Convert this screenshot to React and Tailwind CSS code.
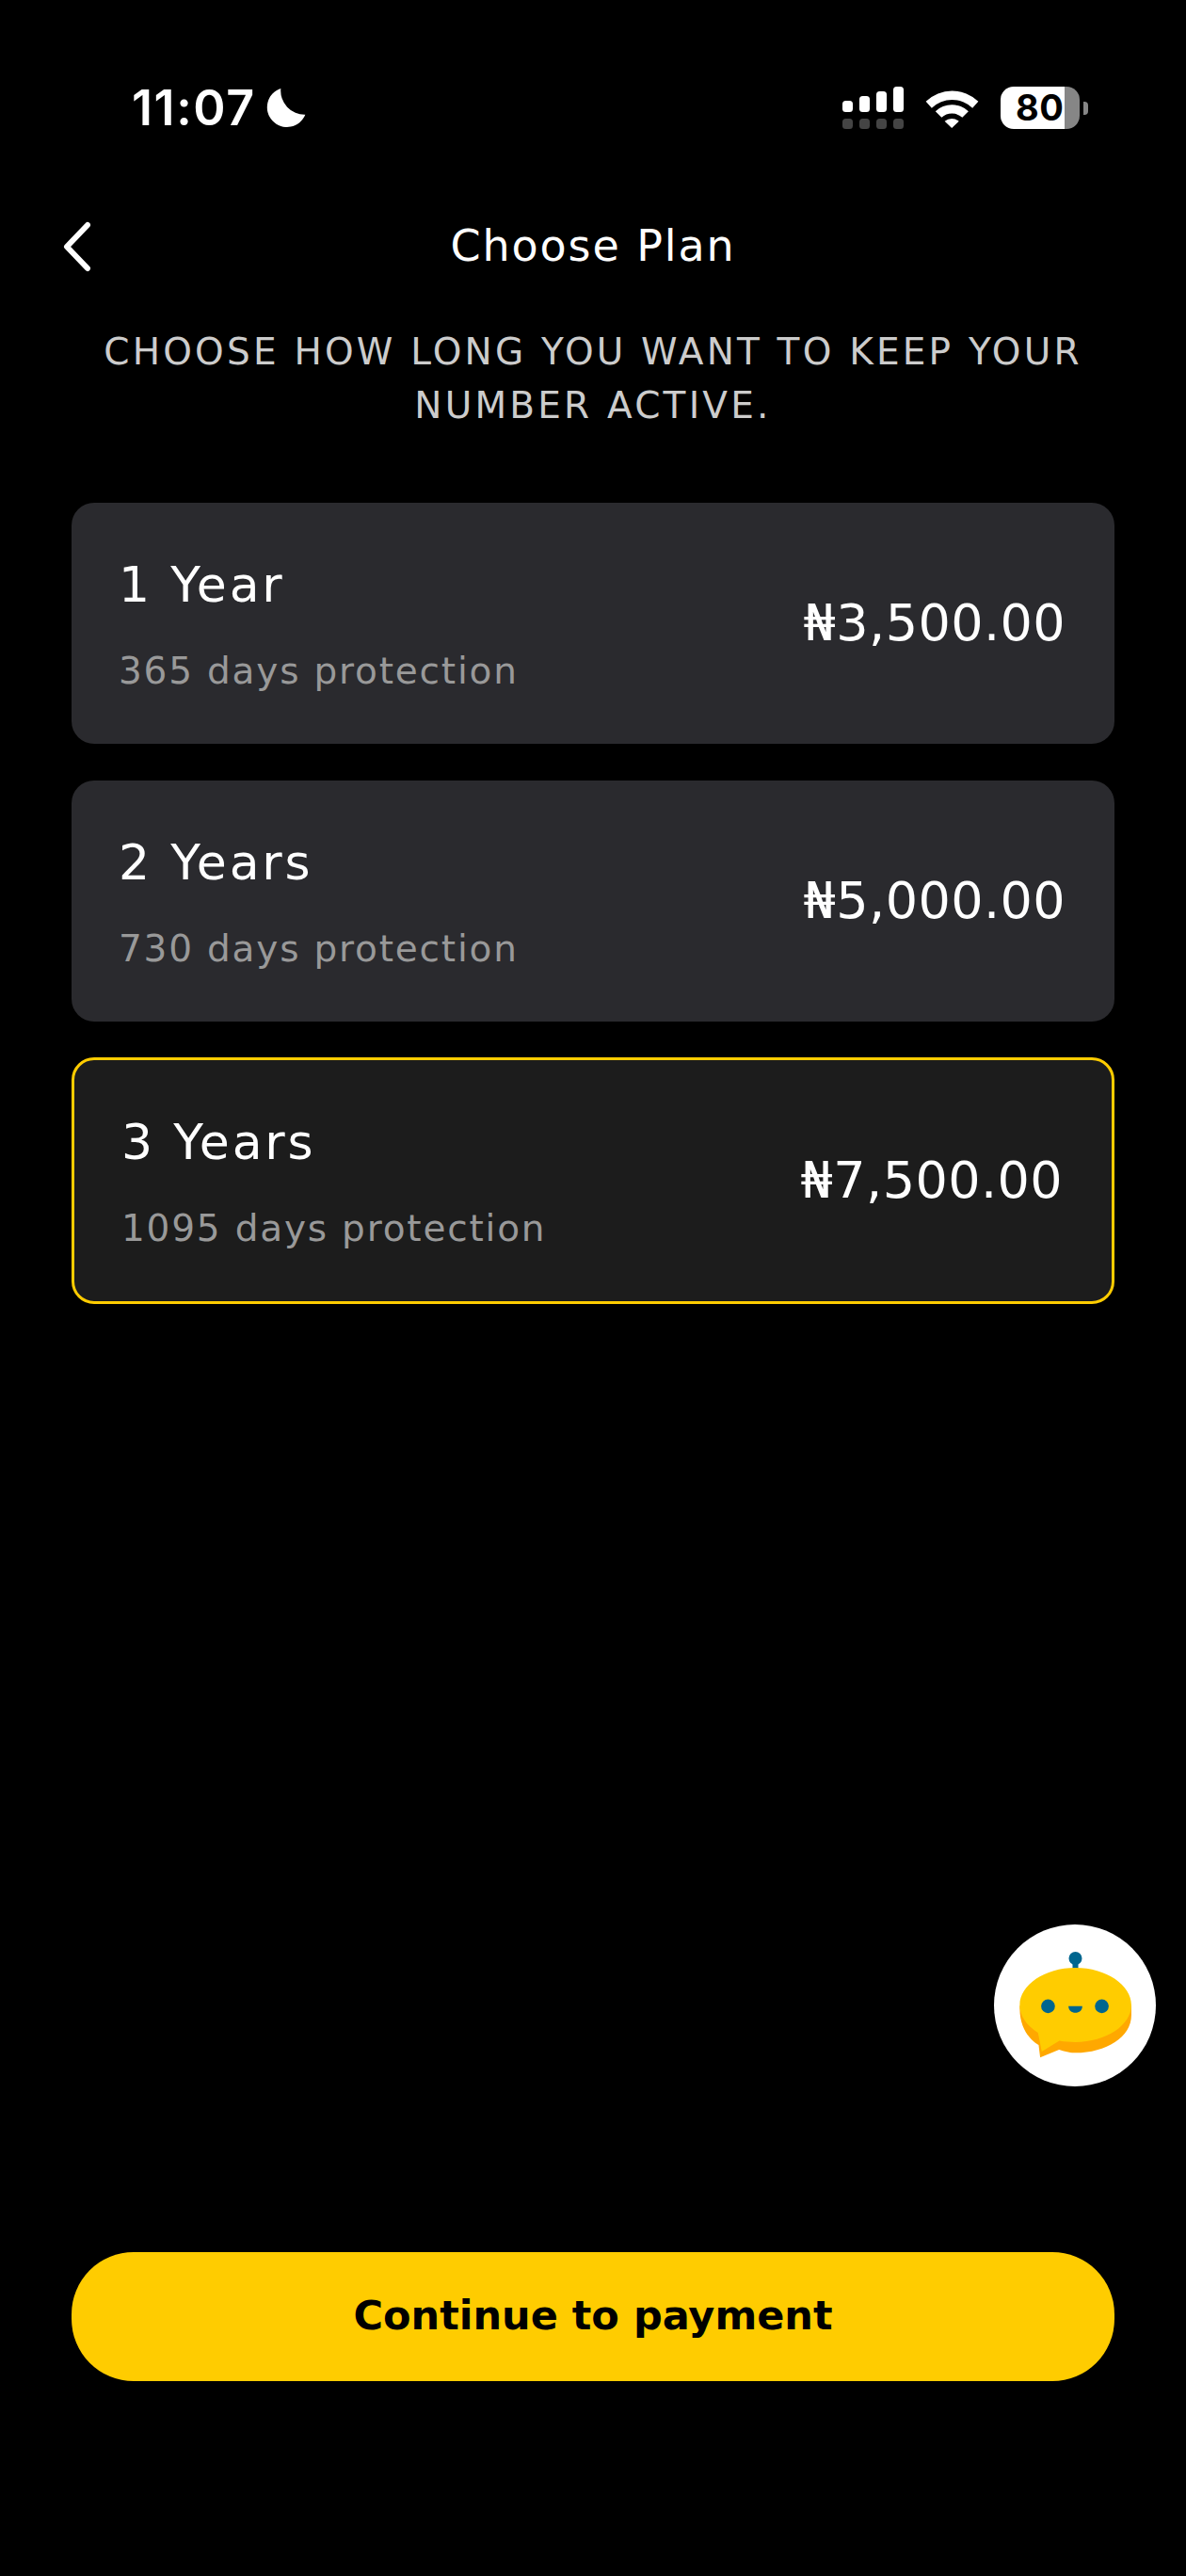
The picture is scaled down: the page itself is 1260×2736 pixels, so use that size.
import React from 'react';

const plans = [
  { id: 1, title: '1 Year', days: '365 days protection', price: '₦3,500.00' },
  { id: 2, title: '2 Years', days: '730 days protection', price: '₦5,000.00' },
  { id: 3, title: '3 Years', days: '1095 days protection', price: '₦7,500.00', selected: true },
];

function Moon() {
  return (
    <svg className="w-[42px] h-[42px] ml-[11px]" viewBox="545 105 124 126" fill="#fff">
      <path d="M590 105A63 63 0 1 0 668 188A76 76 0 0 1 590 105Z" />
    </svg>
  );
}

function Signal() {
  return (
    <svg className="w-[65px] h-[45px]" viewBox="0 0 65 45" fill="#fff">
      <rect x="0" y="15" width="11" height="12" rx="3.5" />
      <rect x="18" y="10" width="11" height="17" rx="3.5" />
      <rect x="36" y="5" width="11" height="22" rx="3.5" />
      <rect x="54" y="0" width="11" height="27" rx="3.5" />
      <g fill="#444">
        <rect x="0" y="34" width="11" height="11" rx="3.5" />
        <rect x="18" y="34" width="11" height="11" rx="3.5" />
        <rect x="36" y="34" width="11" height="11" rx="3.5" />
        <rect x="54" y="34" width="11" height="11" rx="3.5" />
      </g>
    </svg>
  );
}

function Wifi() {
  return (
    <svg className="w-[57px] h-[42px]" viewBox="368 68 172 128" fill="#fff">
      <path d="M369 110A122 122 0 0 1 539 110L520 131A95 95 0 0 0 388 131Z" />
      <path d="M400 142A78 78 0 0 1 507 142L487 162A50 50 0 0 0 420 162Z" />
      <path d="M430 174A36 36 0 0 1 476 174L453 196Z" />
    </svg>
  );
}

function Battery() {
  return (
    <div className="flex items-center">
      <div className="relative flex w-[84px] h-[45px] rounded-[14px] overflow-hidden">
        <div className="w-[68px] bg-white" />
        <div className="flex-1 bg-[#868686]" />
        <span className="absolute left-[16px] top-0 leading-[45px] text-[38px] font-bold text-black tracking-[0.5px] font-['Inter',sans-serif]">
          80
        </span>
      </div>
      <div className="w-[5px] h-[14px] ml-[4px] bg-[#868686] rounded-r-[4px]" />
    </div>
  );
}

function BotIcon() {
  return (
    <svg className="w-full h-full" viewBox="48 42 515 515">
      <circle cx="307" cy="150" r="21" fill="#00668f" />
      <rect x="298" y="160" width="18" height="30" fill="#00668f" />
      <path d="M130 310C130 395 190 425 190 425L195 465L255 440C275 447 295 450 307 450C405 450 485 400 485 330V300H130Z" fill="#ffa800" />
      <path d="M307 180C405 180 485 235 485 298C485 362 405 416 307 416C290 416 272 415 256 412L200 446L188 386C152 364 130 333 130 298C130 235 209 180 307 180Z" fill="#ffcc00" />
      <circle cx="220" cy="302" r="22" fill="#00668f" />
      <circle cx="391" cy="302" r="22" fill="#00668f" />
      <path d="M285 302H329C329 315 319 323 307 323C295 323 285 315 285 302Z" fill="#00668f" />
    </svg>
  );
}

function PlanCard({ plan }) {
  return (
    <div
      className={`flex items-center justify-between rounded-[24px] ${
        plan.selected
          ? 'h-[262px] pl-[50px] pr-[52px] bg-[#1c1c1c] border-[3px] border-[#ffcc00]'
          : 'h-[256px] pl-[50px] pr-[52px] bg-[#2a2a2e]'
      }`}
    >
      <div className="pt-[4px]">
        <div className="text-[52px] leading-[64px] text-white tracking-[2.8px]">{plan.title}</div>
        <div className="text-[39px] leading-[52px] mt-[34px] text-[#999999] tracking-[1.8px]">{plan.days}</div>
      </div>
      <div className="text-[54px] leading-[64px] text-white tracking-[0.4px]">{plan.price}</div>
    </div>
  );
}

export default function App() {
  return (
    <div className="relative flex flex-col w-[1260px] h-[2736px] bg-black font-['DejaVu_Sans',sans-serif]">
      {/* Status bar */}
      <div className="flex items-center justify-between h-[45px] mt-[92px] pl-[140px] pr-[104px]">
        <div className="flex items-center">
          <span className="text-[52px] leading-[45px] font-semibold text-white tracking-[1.6px] font-['Inter',sans-serif]">11:07</span>
          <Moon />
        </div>
        <div className="flex items-center gap-[23px]">
          <Signal />
          <Wifi />
          <Battery />
        </div>
      </div>

      {/* Header */}
      <div className="relative flex items-center justify-center h-[60px] mt-[94px]">
        <svg className="absolute left-[62px] top-[4px] w-[40px] h-[54px]" viewBox="0 0 40 54" fill="none" stroke="#fff" strokeWidth="6" strokeLinecap="round" strokeLinejoin="round">
          <path d="M31 4L9 27L31 50" />
        </svg>
        <h1 className="text-[46px] leading-[60px] font-normal text-white tracking-[1.9px]">Choose Plan</h1>
      </div>

      <p className="mt-[54px] px-[100px] text-center text-[39px] leading-[57px] text-[#cccccc] tracking-[3.2px]">
        CHOOSE HOW LONG YOU WANT TO KEEP YOUR NUMBER ACTIVE.
      </p>

      {/* Plans */}
      <div className="flex flex-col gap-[38.5px] mt-[75px] mx-[76px]">
        {plans.map(plan => (
          <PlanCard key={plan.id} plan={plan} />
        ))}
      </div>

      {/* Chat bot button */}
      <div className="absolute left-[1056px] top-[2044px] w-[172px] h-[172px] rounded-full bg-white">
        <BotIcon />
      </div>

      <button className="mt-auto mb-[207px] mx-[76px] h-[137px] rounded-[66px] bg-[#ffcc00] text-black text-[43px] font-bold leading-[60px] pb-[4px]">
        Continue to payment
      </button>
    </div>
  );
}
